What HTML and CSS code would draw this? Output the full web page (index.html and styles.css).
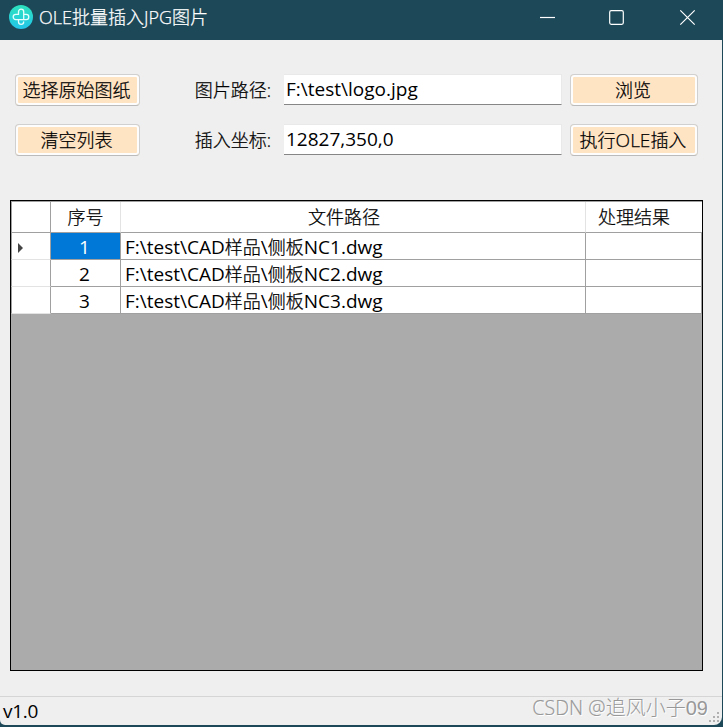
FILE: index.html
```html
<!DOCTYPE html>
<html lang="zh-CN">
<head>
<meta charset="utf-8">
<title>OLE批量插入JPG图片</title>
<link rel="stylesheet" href="styles.css">
</head>
<body>
<div class="window">
  <header class="titlebar">
    <svg class="logo" viewBox="0 0 24 24" width="24" height="24">
      <defs><linearGradient id="g" x1="0" y1="0" x2="0" y2="1"><stop offset="0" stop-color="#2de3bd"/><stop offset="1" stop-color="#22c5ea"/></linearGradient></defs>
      <circle cx="12" cy="12" r="12" fill="url(#g)"/>
      <path d="M9.800 14.600H6.800a2.600 2.600 0 0 1 0-5.200H9.500V6.800a2.600 2.600 0 0 1 5.200 0V14.600M14.700 9.400h2.500a2.600 2.600 0 0 1 0 5.200H9.500v2.200a2.600 2.600 0 0 0 5.200 0" fill="none" stroke="#e4fffc" stroke-width="1.300" stroke-linecap="round"/>
    </svg>
    <h1 class="title"><span class="latin">OLE</span>批量插入<span class="latin">JPG</span>图片</h1>
    <div class="controls">
      <svg class="control" viewBox="0 0 70 40"><path d="M17 17.500h15"/></svg>
      <svg class="control" viewBox="0 0 70 40"><rect x="16.700" y="10.700" width="13.600" height="13.600" rx="1.500"/></svg>
      <svg class="control" viewBox="0 0 70 40"><path d="M17.300 10.300l14.400 14.400M31.700 10.300L17.300 24.700"/></svg>
    </div>
  </header>
  <main class="client">
    <section class="form">
      <button class="btn">选择原始图纸</button>
      <label class="label" for="path">图片路径:</label>
      <input class="field" id="path" value="F:\test\logo.jpg">
      <button class="btn">浏览</button>
      <button class="btn">清空列表</button>
      <label class="label" for="coord">插入坐标:</label>
      <input class="field" id="coord" value="12827,350,0">
      <button class="btn">执行<span class="latin">OLE</span>插入</button>
    </section>
    <section class="datagrid">
      <div class="row head"><div class="cell stub"></div><div class="cell">序号</div><div class="cell file">文件路径</div><div class="cell result">处理结果</div></div>
      <div class="row"><div class="cell stub"><svg class="marker" viewBox="0 0 5 10" width="5" height="10"><path d="M0 0l5 5-5 5z"/></svg></div><div class="cell number selected">1</div><div class="cell path"><span class="latin">F:\test\CAD</span>样品<span class="latin">\</span>侧板<span class="latin">NC1.dwg</span></div><div class="cell"></div></div>
      <div class="row"><div class="cell stub"></div><div class="cell number">2</div><div class="cell path"><span class="latin">F:\test\CAD</span>样品<span class="latin">\</span>侧板<span class="latin">NC2.dwg</span></div><div class="cell"></div></div>
      <div class="row"><div class="cell stub"></div><div class="cell number">3</div><div class="cell path"><span class="latin">F:\test\CAD</span>样品<span class="latin">\</span>侧板<span class="latin">NC3.dwg</span></div><div class="cell"></div></div>
    </section>
  </main>
  <footer class="statusbar">
    <span class="version">v1.0</span>
    <span class="watermark"><span class="handle">CSDN @</span>追风小子09</span>
    <svg class="grip" viewBox="0 0 10 10" width="10" height="10"><path d="M8 0h2v2H8zM4 4h2v2H4zM8 4h2v2H8zM0 8h2v2H0zM4 8h2v2H4zM8 8h2v2H8z"/></svg>
  </footer>
</div>
</body>
</html>
```
FILE: styles.css
```css
* { box-sizing: border-box; }
body {
  margin: 0;
  width: 723px;
  height: 727px;
  overflow: hidden;
  background: #1d4858;
  color: #000;
  font: 300 18px/26px "Open Sans", "Noto Sans CJK SC", sans-serif;
  -webkit-text-stroke: 0.25px currentColor;
}
.latin, .number, .version { font-size: 19px; font-weight: 400; line-height: 1; -webkit-text-stroke: 0; }
.window {
  width: 722px;
  height: 725px;
  display: flex;
  flex-direction: column;
  background: #efefef;
  border-radius: 0 0 8px 5px;
}
.titlebar {
  height: 40px;
  margin-right: -1px;
  padding-left: 9px;
  display: flex;
  flex: none;
  background: #1d4858;
  color: #fff;
}
.logo { margin-top: 5px; }
.title {
  margin: 4px 0 0 6px;
  font-size: 18px;
  font-weight: 300;
  white-space: nowrap;
}
.title .latin {
  font-size: 18px;
  font-weight: 300;
  -webkit-text-stroke: 0.25px currentColor;
}
.controls { display: flex; margin-left: auto; width: 200px; }
.control {
  width: 70px;
  height: 40px;
  flex: none;
  fill: none;
  stroke: #fff;
  stroke-width: 1.2;
}
.client { flex: 1; }
.form {
  display: grid;
  grid-template-columns: 125px 144px 277px 137px;
  grid-template-rows: 32px 32px;
  row-gap: 18px;
  margin: 34px 0 0 15px;
}
.btn {
  border: 1px solid #d0d0d0;
  border-bottom-color: #bbb;
  border-radius: 4px;
  padding: 0 2px 0 0;
  background: #ffe4c4;
  box-shadow: inset 0 0 0 2px #fdfdfd;
  color: inherit;
  font: inherit;
  white-space: nowrap;
}
.btn .latin {
  font-size: 19px;
  font-weight: 300;
  -webkit-text-stroke: 0.25px currentColor;
}
.label { text-align: right; padding: 3px 13px 0 0; white-space: nowrap; }
.field {
  height: 31px;
  width: 278px;
  border: 1px solid #e9e9e9;
  border-width: 1px 1px 1px 0;
  border-bottom-color: #868686;
  padding: 0 0 2px 2px;
  background: #fff;
  color: inherit;
  font: 400 19px/26px "Open Sans", sans-serif;
  -webkit-text-stroke: 0;
  outline: 0;
}
.field + .btn { margin-left: 9px; }
.datagrid {
  width: 693px;
  height: 471px;
  margin: 44px 0 0 10px;
  border: 1px solid #000;
  background: #ababab;
}
.row {
  display: grid;
  grid-template-columns: 40px 70px 465px 116px;
  height: 27px;
  background: #fff;
}
.head { height: 32px; border-top: 1px solid #a0a0a0; }
.cell {
  border: solid #a0a0a0;
  border-width: 0 1px 1px 0;
  text-align: center;
  padding-top: 1px;
  padding-right: 2px;
  white-space: nowrap;
  overflow: hidden;
}
.cell.number { line-height: 26px; }
.head .cell { border-right-color: #e3e3e3; padding: 2px 0 0; }
.row .stub { border-left: 1px solid #a0a0a0; border-right-color: #a0a0a0; border-bottom-color: #e3e3e3; }
.head .stub { border-bottom-color: #a0a0a0; }
.head .file { padding-right: 18px; }
.head .result { padding-right: 20px; border-right: 0; }
.selected { background: #0078d7; color: #fff; }
.path { text-align: left; padding-left: 4px; }
.marker { display: block; margin: 9px 0 0 6px; fill: #444; }
.statusbar {
  height: 29px;
  border-top: 1px solid #d5d5d5;
  padding-left: 3px;
  display: flex;
  flex: none;
}
.version { line-height: 26px; margin-top: 1px; letter-spacing: -0.3px; }
.watermark {
  margin: -3px 0 0 auto;
  font: 300 20px/28px "Liberation Sans", "Noto Sans CJK SC", sans-serif;
  color: #989898;
  text-shadow: 1px 1px 0 #fff;
  white-space: nowrap;
  -webkit-text-stroke: 0;
}
.handle { font-family: "Open Sans", sans-serif; font-size: 19.5px; letter-spacing: 0.1px; -webkit-text-stroke: 0.2px currentColor; }
.grip { flex: none; margin: 15px 3px 0 1px; fill: #b0b0b0; }
```
